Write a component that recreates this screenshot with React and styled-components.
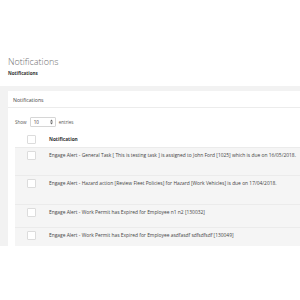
import React from "react";
import styled, { createGlobalStyle } from "styled-components";

const GlobalStyle = createGlobalStyle`
  html, body {
    margin: 0;
    padding: 0;
    background: #fff;
    font-family: "Open Sans", "Liberation Sans", sans-serif;
  }
`;

const rows = [
  {
    text: "Engage Alert - General Task [ This is testing task ] is assigned to John Ford [1025] which is due on 16/05/2018.",
    height: 28,
  },
  {
    text: "Engage Alert - Hazard action [Review Fleet Policies] for Hazard [Work Vehicles] is due on 17/04/2018.",
    height: 29,
  },
  {
    text: "Engage Alert - Work Permit has Expired for Employee n1 n2 [130032]",
    height: 23,
  },
  {
    text: "Engage Alert - Work Permit has Expired for Employee asdfasdf sdfsdfsdf [130049]",
    height: 20,
  },
];

const App = () => {
  return (
    <>
      <GlobalStyle />
      <Page>
        <Header>
          <Title>Notifications</Title>
          <Crumb>Notifications</Crumb>
        </Header>
        <Content>
          <Panel>
            <PanelHead>Notifications</PanelHead>
            <PanelBody>
              <Length>
                Show
                <Select>
                  <span>10</span>
                  <Arrows>
                    <svg width="3" height="6" viewBox="0 0 3 6">
                      <path d="M0 2.4 L1.5 0.6 L3 2.4 Z" fill="#666" />
                      <path d="M0 3.6 L1.5 5.4 L3 3.6 Z" fill="#666" />
                    </svg>
                  </Arrows>
                </Select>
                entries
              </Length>
              <Table>
                <HeadRow>
                  <CheckCell>
                    <Check />
                  </CheckCell>
                  <HeadText>Notification</HeadText>
                </HeadRow>
                {rows.map((r, i) => (
                  <Row key={i} $h={r.height}>
                    <CheckCell>
                      <Check />
                    </CheckCell>
                    <RowText>{r.text}</RowText>
                  </Row>
                ))}
              </Table>
            </PanelBody>
          </Panel>
        </Content>
      </Page>
    </>
  );
};

const Page = styled.div`
  width: 300px;
  height: 300px;
  overflow: hidden;
  background: #fff;
`;

const Header = styled.div`
  height: 86px;
  padding: 56px 0 0 8px;
  box-sizing: border-box;
`;

const Title = styled.div`
  font-size: 9px;
  line-height: 12px;
  font-weight: 300;
  color: #707070;
`;

const Crumb = styled.div`
  margin-top: 1px;
  font-size: 4.6px;
  line-height: 8px;
  font-weight: 700;
  color: #333;
`;

const Content = styled.div`
  height: 160px;
  background: #f2f2f2;
  padding: 5px 0 0 8px;
  box-sizing: border-box;
  overflow: hidden;
`;

const Panel = styled.div`
  background: #fff;
  height: 100%;
  width: 400px;
`;

const PanelHead = styled.div`
  height: 17px;
  padding: 3px 0 0 5px;
  box-sizing: border-box;
  border-bottom: 1px solid #ececec;
  font-size: 5.2px;
  line-height: 12px;
  color: #444;
`;

const PanelBody = styled.div`
  padding: 8px 0 0 7px;
`;

const Length = styled.div`
  display: flex;
  align-items: center;
  gap: 3px;
  height: 11px;
  font-size: 4.6px;
  color: #555;
`;

const Select = styled.div`
  width: 26px;
  height: 10px;
  box-sizing: border-box;
  border: 1px solid #d6d6d6;
  border-radius: 1px;
  display: flex;
  align-items: center;
  justify-content: space-between;
  padding: 0 2px 0 3px;
  color: #444;
`;

const Arrows = styled.span`
  display: flex;
  align-items: center;
`;

const Table = styled.div``;

const HeadRow = styled.div`
  display: flex;
  align-items: center;
  height: 20px;
  box-sizing: border-box;
  padding: 8px 0 4px;
  background: #fff;
`;

const HeadText = styled.div`
  font-size: 4.8px;
  font-weight: 700;
  color: #333;
`;

const Row = styled.div`
  display: flex;
  align-items: flex-start;
  height: ${(p) => p.$h}px;
  box-sizing: border-box;
  padding-top: 3px;
  background: #f5f5f5;
  border-top: 1px solid #ebebeb;
`;

const CheckCell = styled.div`
  width: 34px;
  padding-left: 12px;
  box-sizing: border-box;
  display: flex;
  align-items: center;
`;

const Check = styled.span`
  display: block;
  width: 9px;
  height: 9px;
  box-sizing: border-box;
  background: #fff;
  border: 1px solid #dcdcdc;
  border-radius: 1px;
`;

const RowText = styled.div`
  font-size: 4.9px;
  line-height: 9px;
  color: #444;
  white-space: nowrap;
`;

export default App;
